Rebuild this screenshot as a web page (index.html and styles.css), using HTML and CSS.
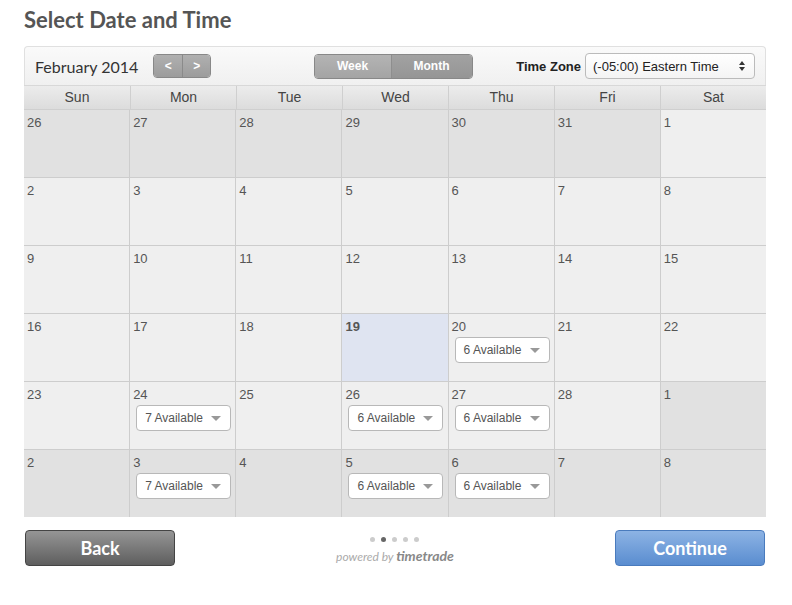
FILE: index.html
```html
<!DOCTYPE html>
<html lang="en">
<head>
    <meta charset="UTF-8">
    <meta name="viewport" content="width=device-width, initial-scale=1.0">
    <title>Select Date and Time</title>
    <link rel="stylesheet" href="styles.css">
</head>
<body>
    <h1>Select Date and Time</h1>

    <div class="calendar">
        <div class="toolbar">
            <div class="toolbar-left">
                <span class="month-title">February 2014</span>
                <div class="nav-buttons">
                    <button>&lt;</button>
                    <button>&gt;</button>
                </div>
            </div>
            <div class="view-toggle">
                <button class="week-btn">Week</button>
                <button class="month-btn">Month</button>
            </div>
            <div class="toolbar-right">
                <label>Time Zone</label>
                <div class="tz-select">
                    <span>(-05:00) Eastern Time</span>
                    <svg width="8" height="12" viewBox="0 0 8 12"><path d="M4 1 L7 5 H1 Z M4 11 L7 7 H1 Z" fill="#333"/></svg>
                </div>
            </div>
        </div>

        <div class="day-names">
            <div>Sun</div><div>Mon</div><div>Tue</div><div>Wed</div><div>Thu</div><div>Fri</div><div>Sat</div>
        </div>

        <div class="days" id="days"></div>
    </div>

    <div class="footer">
        <button class="btn back-btn">Back</button>
        <div class="powered">
            <div class="dots"><span></span><span class="on"></span><span></span><span></span><span></span></div>
            <div class="brand">powered by <b>timetrade</b></div>
        </div>
        <button class="btn continue-btn">Continue</button>
    </div>

    <script>
        // 6 weeks, starting Sun 26 Jan 2014
        const available = { '2-20': 6, '2-24': 7, '2-26': 6, '2-27': 6, '3-3': 7, '3-5': 6, '3-6': 6 };
        const grid = document.getElementById('days');
        const start = new Date(2014, 0, 26);

        for (let i = 0; i < 42; i++) {
            const d = new Date(start);
            d.setDate(start.getDate() + i);
            const month = d.getMonth() + 1;
            const day = d.getDate();
            const cell = document.createElement('div');
            cell.className = 'day';
            if (month !== 2) cell.classList.add('other');
            if (month === 2 && day === 19) cell.classList.add('today');
            cell.innerHTML = `<span class="num">${day}</span>`;
            const count = available[month + '-' + day];
            if (count) {
                cell.innerHTML += `<div class="avail">${count} Available <i class="caret"></i></div>`;
            }
            grid.appendChild(cell);
        }
    </script>
</body>
</html>
```

FILE: styles.css
```css
body {
    font-family: "Liberation Sans", Arial, sans-serif;
    background-color: #fff;
    color: #555;
    margin: 0;
    padding: 8px 26px 0 24px;
}

h1 {
    font-family: Lato, "Open Sans", sans-serif;
    font-size: 22px;
    font-weight: bold;
    color: #555;
    margin: 0 0 14px 0;
    line-height: 24px;
}

.calendar {
    width: 742px;
}

.toolbar {
    display: grid;
    grid-template-columns: 1fr auto 1fr;
    align-items: center;
    height: 38px;
    border: 1px solid #e0e0e0;
    border-bottom: none;
    border-radius: 4px 4px 0 0;
    background: linear-gradient(#fafafa, #f0f0f0);
    padding: 0 10px;
}

.toolbar-left {
    display: flex;
    align-items: center;
}

.month-title {
    font-family: Lato, "Open Sans", sans-serif;
    font-size: 16px;
    color: #333;
    margin-right: 15px;
}

.nav-buttons {
    display: flex;
    border: 1px solid #888;
    border-radius: 4px;
    overflow: hidden;
}

.nav-buttons button {
    width: 28px;
    height: 22px;
    border: none;
    background: linear-gradient(#b0b0b0, #9c9c9c);
    color: #fff;
    font-weight: bold;
    font-size: 12px;
    padding: 0;
    cursor: pointer;
}

.nav-buttons button + button {
    border-left: 1px solid #8a8a8a;
}

.view-toggle {
    display: flex;
    border: 1px solid #888;
    border-radius: 4px;
    overflow: hidden;
    margin-right: 4px;
}

.view-toggle button {
    height: 23px;
    border: none;
    color: #fff;
    font-family: "Liberation Sans", Arial, sans-serif;
    font-weight: bold;
    font-size: 12px;
    cursor: pointer;
}

.week-btn {
    width: 77px;
    background: linear-gradient(#b4b4b4, #a4a4a4);
    border-right: 1px solid #8e8e8e !important;
}

.month-btn {
    width: 80px;
    background: linear-gradient(#a2a2a2, #959595);
}

.toolbar-right {
    display: flex;
    align-items: center;
    justify-content: flex-end;
}

.toolbar-right label {
    font-weight: bold;
    font-size: 13px;
    color: #222;
    margin-right: 4px;
}

.tz-select {
    display: flex;
    align-items: center;
    justify-content: space-between;
    width: 153px;
    height: 24px;
    padding: 0 8px 0 7px;
    border: 1px solid #bbb;
    border-radius: 4px;
    background: linear-gradient(#fff, #f4f4f4);
    font-size: 13px;
    color: #222;
}

.day-names {
    display: grid;
    grid-template-columns: repeat(7, 1fr);
    background: linear-gradient(#ececec, #dcdcdc);
    border-top: 1px solid #d8d8d8;
    border-bottom: 1px solid #cfcfcf;
}

.day-names div {
    height: 23px;
    line-height: 23px;
    text-align: center;
    font-size: 14px;
    color: #444;
    border-left: 1px solid #cfcfcf;
}

.day-names div:first-child {
    border-left: none;
}

.days {
    display: grid;
    grid-template-columns: repeat(7, 1fr);
    grid-auto-rows: 67px;
    gap: 1px;
    background-color: #cdcdcd;
}

.day {
    background-color: #efefef;
    padding: 5px 4px 0 3px;
}

.day.other {
    background-color: #e1e1e1;
}

.day.today {
    background-color: #dfe4f1;
}

.day.today .num {
    font-weight: bold;
}

.num {
    display: block;
    font-size: 13px;
    line-height: 15px;
    color: #555;
}

.avail {
    display: flex;
    align-items: center;
    justify-content: space-between;
    width: 95px;
    height: 26px;
    margin: 3px 0 0 3px;
    padding: 0 9px 0 8px;
    box-sizing: border-box;
    background: #fff;
    border: 1px solid #b8b8b8;
    border-radius: 4px;
    font-size: 12px;
    color: #555;
}

.caret {
    width: 0;
    height: 0;
    border-left: 5px solid transparent;
    border-right: 5px solid transparent;
    border-top: 5px solid #999;
}

.footer {
    display: flex;
    justify-content: space-between;
    align-items: flex-start;
    width: 741px;
    margin-top: 13px;
}

.btn {
    width: 150px;
    height: 36px;
    border-radius: 4px;
    color: #fff;
    font-family: Lato, "Open Sans", sans-serif;
    font-weight: bold;
    font-size: 18px;
    cursor: pointer;
}

.back-btn {
    margin-left: 1px;
    background: linear-gradient(#959595, #5e5e5e);
    border: 1px solid #444;
}

.continue-btn {
    background: linear-gradient(#8db3e4, #5a8dd0);
    border: 1px solid #4a7bbd;
}

.powered {
    text-align: center;
    margin-top: 7px;
}

.dots {
    display: flex;
    justify-content: center;
    gap: 6px;
}

.dots span {
    width: 5px;
    height: 5px;
    border-radius: 50%;
    background-color: #ccc;
}

.dots span.on {
    background-color: #666;
}

.brand {
    font-family: Lato, "Open Sans", sans-serif;
    font-style: italic;
    font-size: 12px;
    color: #aaa;
    margin-top: 5px;
}

.brand b {
    font-size: 14px;
    color: #888;
}
```
